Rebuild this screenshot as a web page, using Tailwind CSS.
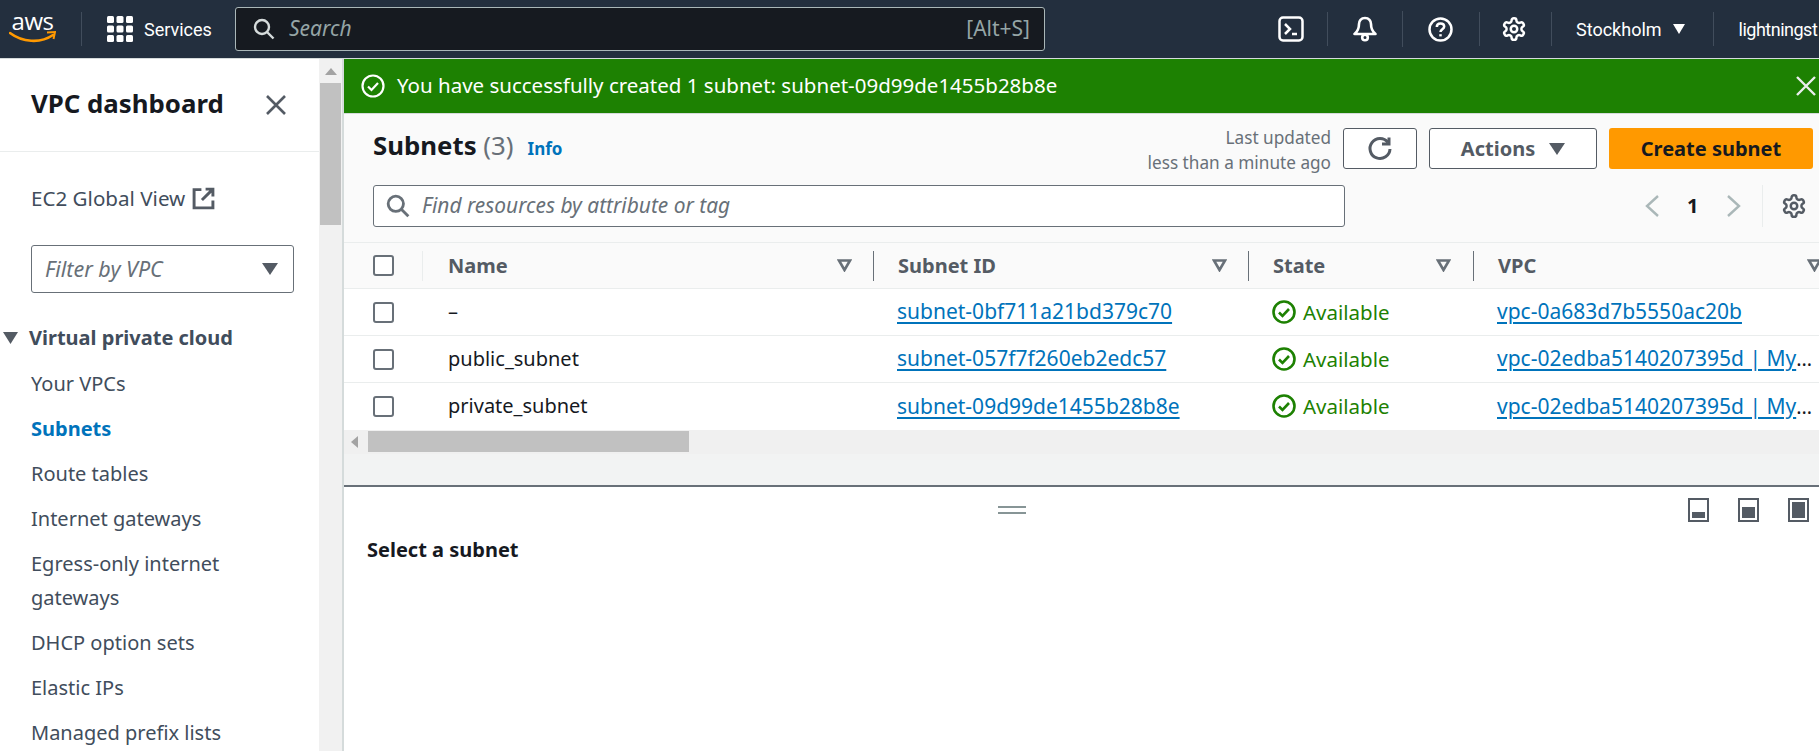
<!DOCTYPE html>
<html lang="en">
<head>
    <meta charset="UTF-8">
    <title>Subnets | VPC Console</title>
    <script src="https://cdn.jsdelivr.net/npm/@tailwindcss/browser@4"></script>
</head>
<body class="h-screen overflow-hidden bg-white font-['Noto_Sans',sans-serif] text-[20px] text-[#16191f]">
    <!-- Top bar -->
    <header class="h-[59px] flex items-center bg-[#232f3e] border-b border-[#d5dbdb] text-white whitespace-nowrap overflow-hidden font-['Roboto',sans-serif] text-[18px]">
        <div class="w-[82px] h-[34px] border-r border-[#414d5c] shrink-0 pl-[9px]">
            <div class="w-[47px] h-[34px] relative">
                <span class="block text-[24px] leading-[22px] font-['Open_Sans',sans-serif] tracking-[-0.5px] text-center -mt-[2px]">aws</span>
                <svg class="absolute left-0 top-[20px]" width="47" height="14" viewBox="0 0 47 14" fill="none"><path d="M1 3c12 9 30 11 43 2" stroke="#ff9900" stroke-width="2.6" stroke-linecap="round"/><path d="M38 2.5l8-.5-1.5 7" stroke="#ff9900" stroke-width="2" fill="none"/></svg>
            </div>
        </div>
        <svg class="ml-[25px] shrink-0" width="26" height="26" viewBox="0 0 26 26" fill="#fff"><rect x="0" y="0" width="7" height="7" rx="1.5"/><rect x="9.500" y="0" width="7" height="7" rx="1.500"/><rect x="19" y="0" width="7" height="7" rx="1.500"/><rect x="0" y="9.500" width="7" height="7" rx="1.500"/><rect x="9.500" y="9.500" width="7" height="7" rx="1.500"/><rect x="19" y="9.500" width="7" height="7" rx="1.500"/><rect x="0" y="19" width="7" height="7" rx="1.500"/><rect x="9.500" y="19" width="7" height="7" rx="1.500"/><rect x="19" y="19" width="7" height="7" rx="1.500"/></svg>
        <span class="ml-[11px] w-[91px] shrink-0">Services</span>
        <div class="w-[810px] h-[44px] shrink-0 flex items-center bg-[#161a20] border border-[#aab7b8] rounded-[3px] pl-[17px] pr-[14px] font-['Noto_Sans',sans-serif] text-[21px]">
            <svg width="22" height="22" viewBox="0 0 22 22" fill="none" stroke="#d5dbdb" stroke-width="2.400"><circle cx="9" cy="9" r="7"/><path d="M14 14l6.500 6.500"/></svg>
            <span class="ml-[14px] italic text-[#95a5a6]">Search</span>
            <span class="ml-auto text-[#95a5a6]">[Alt+S]</span>
        </div>
        <svg class="ml-[233px] shrink-0" width="26" height="26" viewBox="0 0 26 26" fill="none" stroke="#fff" stroke-width="2.500"><rect x="1.500" y="1.500" width="23" height="23" rx="3.500"/><path d="M7 8l5 5-5 5M14 18h5"/></svg>
        <div class="ml-[23px] w-px h-[34px] bg-[#414d5c] shrink-0"></div>
        <svg class="ml-[25px] shrink-0" width="24" height="26" viewBox="0 0 24 26" fill="none" stroke="#fff" stroke-width="2.600" stroke-linejoin="round"><path d="M12 2c-4 0-6 3-6 6 0 5-2 8-4.500 10h21C20 16 18 13 18 8c0-3-2-6-6-6z"/><circle cx="12" cy="21.500" r="2.800"/></svg>
        <div class="ml-[25px] w-px h-[36px] bg-[#414d5c] shrink-0"></div>
        <svg class="ml-[25px] shrink-0" width="25" height="25" viewBox="0 0 25 25" fill="none" stroke="#fff" stroke-width="2.500"><circle cx="12.500" cy="12.500" r="11"/><path d="M8.800 10c0-2.200 1.600-3.600 3.700-3.600s3.700 1.300 3.700 3.200c0 2.700-3.700 2.700-3.700 5.500"/><path d="M12.500 17.200v2.200"/></svg>
        <div class="ml-[26px] w-px h-[34px] bg-[#414d5c] shrink-0"></div>
        <svg class="ml-[21px] shrink-0" width="26" height="26" viewBox="0 0 24 24" fill="none" stroke="#fff" stroke-width="2.300" stroke-linejoin="round"><path d="M12.220 2h-.44a2 2 0 0 0-2 2v.18a2 2 0 0 1-1 1.730l-.43.250a2 2 0 0 1-2 0l-.15-.08a2 2 0 0 0-2.730.730l-.22.380a2 2 0 0 0 .730 2.730l.15.100a2 2 0 0 1 1 1.720v.510a2 2 0 0 1-1 1.740l-.15.090a2 2 0 0 0-.730 2.730l.22.380a2 2 0 0 0 2.730.730l.15-.08a2 2 0 0 1 2 0l.43.250a2 2 0 0 1 1 1.730V20a2 2 0 0 0 2 2h.44a2 2 0 0 0 2-2v-.18a2 2 0 0 1 1-1.730l.43-.25a2 2 0 0 1 2 0l.15.080a2 2 0 0 0 2.730-.730l.22-.39a2 2 0 0 0-.73-2.730l-.15-.08a2 2 0 0 1-1-1.740v-.5a2 2 0 0 1 1-1.740l.15-.09a2 2 0 0 0 .73-2.730l-.22-.38a2 2 0 0 0-2.730-.73l-.15.08a2 2 0 0 1-2 0l-.43-.25a2 2 0 0 1-1-1.730V4a2 2 0 0 0-2-2z"/><circle cx="12" cy="12" r="3"/></svg>
        <div class="ml-[24px] w-px h-[34px] bg-[#414d5c] shrink-0"></div>
        <span class="ml-[24px] shrink-0">Stockholm</span>
        <svg class="ml-[11px] shrink-0" width="12" height="10" viewBox="0 0 12 10" fill="#fff"><path d="M0 0h12L6 10z"/></svg>
        <div class="ml-[28px] w-px h-[34px] bg-[#414d5c] shrink-0"></div>
        <span class="ml-[25px] shrink-0 tracking-[-0.5px]">lightningst</span>
    </header>

    <div class="flex h-[692px]">
        <!-- Side nav -->
        <aside class="w-[319px] shrink-0 overflow-hidden">
            <div class="h-[93px] flex items-center justify-between pl-[31px] pr-[32px] border-b border-[#eaeded]">
                <h1 class="text-[25.800px] font-bold -mt-[4px]">VPC dashboard</h1>
                <svg width="22" height="22" viewBox="0 0 22 22" fill="none" stroke="#545b64" stroke-width="2.600"><path d="M2 2l18 18M20 2L2 20"/></svg>
            </div>
            <a class="mt-[33px] ml-[31px] h-[26px] flex items-center gap-[7px] text-[#414d5c] text-[20.600px]">EC2 Global View
                <svg width="23" height="23" viewBox="0 0 22 22" fill="none" stroke="#545b64" stroke-width="2.800"><path d="M9 2.500H2v17.500h18v-7M13 2h7v7M20 2L9.500 12.500"/></svg>
            </a>
            <div class="mt-[34px] ml-[31px] w-[263px] h-[48px] flex items-center justify-between border border-[#687078] rounded-[3px] pl-[13px] pr-[15px] italic text-[#687078] text-[21.500px]">Filter by VPC
                <svg width="16" height="12" viewBox="0 0 16 12" fill="#545b64"><path d="M0 0h16L8 12z"/></svg>
            </div>
            <div class="mt-[32px] flex items-center h-[26px] pl-[3px] font-bold text-[#414d5c]">
                <svg width="15" height="12" viewBox="0 0 15 12" fill="#545b64"><path d="M0 0h15L7.500 12z"/></svg>
                <span class="ml-[11px]">Virtual private cloud</span>
            </div>
            <ul class="mt-[20px] pl-[31px] text-[#414d5c] leading-[26px] flex flex-col gap-[19px]">
                <li>Your VPCs</li>
                <li class="font-bold text-[#0073bb]">Subnets</li>
                <li>Route tables</li>
                <li>Internet gateways</li>
                <li class="leading-[34px] -my-[4px] w-[240px]">Egress-only internet gateways</li>
                <li>DHCP option sets</li>
                <li>Elastic IPs</li>
                <li>Managed prefix lists</li>
            </ul>
        </aside>

        <!-- Page scrollbar -->
        <div class="w-[24px] shrink-0 bg-[#f1f1f1] border-r border-[#d5dbdb] pl-px">
            <div class="h-[24px] flex items-center justify-center">
                <svg width="12" height="7" viewBox="0 0 12 7" fill="#a3a3a3"><path d="M0 7L6 0l6 7z"/></svg>
            </div>
            <div class="w-[21px] h-[142px] bg-[#c1c1c1]"></div>
        </div>

        <!-- Main -->
        <main class="flex-1 min-w-0 overflow-hidden border-l border-[#d5dbdb]">
            <div class="h-[54px] flex items-center bg-[#1d8102] text-white pl-[17px] pr-[3px] border-b border-[#1d8102]">
                <svg width="24" height="24" viewBox="0 0 24 24" fill="none" stroke="#fff" stroke-width="2.200"><circle cx="12" cy="12" r="10.500"/><path d="M7 12.500l3.500 3.500 6.500-7"/></svg>
                <span class="ml-[12px] text-[20.500px]">You have successfully created 1 subnet: subnet-09d99de1455b28b8e</span>
                <svg class="ml-auto" width="20" height="20" viewBox="0 0 20 20" fill="none" stroke="#eaeded" stroke-width="2.400"><path d="M1 1l18 18M19 1L1 19"/></svg>
            </div>
            <div class="h-[129px] bg-[#fafafa] border-t border-[#d5dbdb] pl-[29px]">
                <div class="pt-[14px] h-[71px] flex items-start pr-[6px]">
                    <h2 class="text-[25.800px] leading-[36px] font-bold -mt-[1px]">Subnets <span class="font-normal text-[#687078]">(3)</span></h2>
                    <a class="ml-[14px] mt-[6px] text-[17px] leading-[30px] font-bold text-[#0073bb]">Info</a>
                    <div class="ml-auto -mt-[3px] text-right text-[#687078] text-[17.200px] leading-[25px]">Last updated<br>less than a minute ago</div>
                    <button class="ml-[12px] w-[74px] h-[41px] flex items-center justify-center bg-white border border-[#545b64] rounded-[3px]">
                        <svg width="26" height="26" viewBox="0 0 26 26" fill="none" stroke="#545b64" stroke-width="3"><path d="M21 6.500A10 10 0 1 0 23 13"/><path d="M22 1.500v6.500h-7"/></svg>
                    </button>
                    <button class="ml-[12px] w-[168px] h-[41px] flex items-center justify-center gap-[14px] bg-white border border-[#545b64] rounded-[3px] font-bold text-[#545b64]">Actions
                        <svg width="16" height="12" viewBox="0 0 16 12" fill="#545b64"><path d="M0 0h16L8 12z"/></svg>
                    </button>
                    <button class="ml-[12px] w-[204px] h-[41px] bg-[#ff9900] rounded-[3px] font-bold">Create subnet</button>
                </div>
                <div class="h-[42px] flex items-center">
                    <div class="w-[972px] h-[42px] flex items-center bg-white border border-[#687078] rounded-[3px] pl-[12px] italic text-[#687078] text-[20.900px]">
                        <svg width="24" height="24" viewBox="0 0 22 22" fill="none" stroke="#687078" stroke-width="2.600"><circle cx="9" cy="9" r="7"/><path d="M14 14l6.500 6.500"/></svg>
                        <span class="ml-[12px]">Find resources by attribute or tag</span>
                    </div>
                    <svg class="ml-[299px]" width="16" height="24" viewBox="0 0 16 24" fill="none" stroke="#aab7b8" stroke-width="2.400"><path d="M14 2L3 12l11 10"/></svg>
                    <span class="ml-[27px] w-[20px] font-bold">1</span>
                    <svg class="ml-[19px]" width="16" height="24" viewBox="0 0 16 24" fill="none" stroke="#aab7b8" stroke-width="2.400"><path d="M2 2l11 10L2 22"/></svg>
                    <div class="ml-[20px] w-px h-[42px] bg-[#eaeded]"></div>
                    <svg class="ml-[18px]" width="26" height="26" viewBox="0 0 24 24" fill="none" stroke="#545b64" stroke-width="2.300" stroke-linejoin="round"><path d="M12.220 2h-.44a2 2 0 0 0-2 2v.18a2 2 0 0 1-1 1.730l-.43.250a2 2 0 0 1-2 0l-.15-.08a2 2 0 0 0-2.730.730l-.22.380a2 2 0 0 0 .730 2.730l.15.100a2 2 0 0 1 1 1.720v.510a2 2 0 0 1-1 1.740l-.15.090a2 2 0 0 0-.730 2.730l.22.380a2 2 0 0 0 2.730.730l.15-.08a2 2 0 0 1 2 0l.43.250a2 2 0 0 1 1 1.730V20a2 2 0 0 0 2 2h.44a2 2 0 0 0 2-2v-.18a2 2 0 0 1 1-1.730l.43-.25a2 2 0 0 1 2 0l.15.080a2 2 0 0 0 2.730-.730l.22-.39a2 2 0 0 0-.73-2.730l-.15-.08a2 2 0 0 1-1-1.740v-.5a2 2 0 0 1 1-1.740l.15-.09a2 2 0 0 0 .73-2.730l-.22-.38a2 2 0 0 0-2.730-.73l-.15.08a2 2 0 0 1-2 0l-.43-.25a2 2 0 0 1-1-1.730V4a2 2 0 0 0-2-2z"/><circle cx="12" cy="12" r="3"/></svg>
                </div>
            </div>

            <!-- Table -->
            <table class="table-fixed w-[1499px] border-collapse">
                <colgroup>
                    <col class="w-[79px]"><col class="w-[450px]"><col class="w-[375px]"><col class="w-[225px]"><col class="w-[370px]">
                </colgroup>
                <thead class="bg-[#fafafa] text-[#545b64] font-bold">
                    <tr class="h-[46px] border-y border-[#eaeded]">
                        <th class="pl-[29px]"><div class="w-[21px] h-[21px] bg-white border-2 border-[#687078] rounded-[3px]"></div></th>
                        <th>
                            <div class="h-[30px] flex items-center border-l border-[#eaeded] pl-[25px] pr-[21px] -ml-px"><span>Name</span>
                                <svg class="ml-auto" width="15" height="13" viewBox="0 0 15 13" fill="none" stroke="#687078" stroke-width="2.600"><path d="M2 1.500h11L7.500 11z"/></svg>
                            </div>
                        </th>
                        <th>
                            <div class="h-[30px] flex items-center border-l border-[#687078] pl-[24px] pr-[21px]"><span>Subnet ID</span>
                                <svg class="ml-auto" width="15" height="13" viewBox="0 0 15 13" fill="none" stroke="#687078" stroke-width="2.600"><path d="M2 1.500h11L7.500 11z"/></svg>
                            </div>
                        </th>
                        <th>
                            <div class="h-[30px] flex items-center border-l border-[#687078] pl-[24px] pr-[22px]"><span>State</span>
                                <svg class="ml-auto" width="15" height="13" viewBox="0 0 15 13" fill="none" stroke="#687078" stroke-width="2.600"><path d="M2 1.500h11L7.500 11z"/></svg>
                            </div>
                        </th>
                        <th>
                            <div class="h-[30px] flex items-center border-l border-[#687078] pl-[24px] pr-[21px]"><span>VPC</span>
                                <svg class="ml-auto" width="15" height="13" viewBox="0 0 15 13" fill="none" stroke="#687078" stroke-width="2.600"><path d="M2 1.500h11L7.500 11z"/></svg>
                            </div>
                        </th>
                    </tr>
                </thead>
                <tbody class="bg-white">
                    <tr class="h-[47px] border-b border-[#eaeded]">
                        <td class="pl-[29px]"><div class="w-[21px] h-[21px] border-2 border-[#687078] rounded-[3px]"></div></td>
                        <td class="pl-[25px]">–</td>
                        <td class="pl-[24px]"><a class="text-[21px] text-[#0073bb] underline decoration-2 underline-offset-[3px]">subnet-0bf711a21bd379c70</a></td>
                        <td class="pl-[24px]"><div class="flex items-center gap-[7px] text-[20.500px] text-[#1d8102]"><svg width="24" height="24" viewBox="0 0 24 24" fill="none" stroke="#1d8102" stroke-width="2.600"><circle cx="12" cy="12" r="10.500"/><path d="M7 12.500l3.500 3.500 6.500-7"/></svg>Available</div></td>
                        <td class="pl-[24px]"><a class="text-[21px] text-[#0073bb] underline decoration-2 underline-offset-[3px]">vpc-0a683d7b5550ac20b</a></td>
                    </tr>
                    <tr class="h-[47px] border-b border-[#eaeded]">
                        <td class="pl-[29px]"><div class="w-[21px] h-[21px] border-2 border-[#687078] rounded-[3px]"></div></td>
                        <td class="pl-[25px]">public_subnet</td>
                        <td class="pl-[24px]"><a class="text-[21px] text-[#0073bb] underline decoration-2 underline-offset-[3px]">subnet-057f7f260eb2edc57</a></td>
                        <td class="pl-[24px]"><div class="flex items-center gap-[7px] text-[20.500px] text-[#1d8102]"><svg width="24" height="24" viewBox="0 0 24 24" fill="none" stroke="#1d8102" stroke-width="2.600"><circle cx="12" cy="12" r="10.500"/><path d="M7 12.500l3.500 3.500 6.500-7"/></svg>Available</div></td>
                        <td class="pl-[24px] whitespace-nowrap"><a class="text-[21px] text-[#0073bb] underline decoration-2 underline-offset-[3px]">vpc-02edba5140207395d | My</a>…</td>
                    </tr>
                    <tr class="h-[47px]">
                        <td class="pl-[29px]"><div class="w-[21px] h-[21px] border-2 border-[#687078] rounded-[3px]"></div></td>
                        <td class="pl-[25px]">private_subnet</td>
                        <td class="pl-[24px]"><a class="text-[21px] text-[#0073bb] underline decoration-2 underline-offset-[3px]">subnet-09d99de1455b28b8e</a></td>
                        <td class="pl-[24px]"><div class="flex items-center gap-[7px] text-[20.500px] text-[#1d8102]"><svg width="24" height="24" viewBox="0 0 24 24" fill="none" stroke="#1d8102" stroke-width="2.600"><circle cx="12" cy="12" r="10.500"/><path d="M7 12.500l3.500 3.500 6.500-7"/></svg>Available</div></td>
                        <td class="pl-[24px] whitespace-nowrap"><a class="text-[21px] text-[#0073bb] underline decoration-2 underline-offset-[3px]">vpc-02edba5140207395d | My</a>…</td>
                    </tr>
                </tbody>
            </table>

            <!-- Horizontal scrollbar -->
            <div class="h-[24px] flex items-center bg-[#f0f0f0]">
                <svg class="ml-[7px]" width="7" height="12" viewBox="0 0 7 12" fill="#a3a3a3"><path d="M7 0L0 6l7 6z"/></svg>
                <div class="ml-[10px] w-[321px] h-[21px] bg-[#c1c1c1]"></div>
            </div>
            <div class="h-[33px] bg-[#f2f3f3] border-b-2 border-[#687078]"></div>

            <!-- Split panel -->
            <div class="h-[46px] flex items-center pr-[10px]">
                <div class="ml-[654px] w-[28px] h-[8px] border-y-2 border-[#879596]"></div>
                <svg class="ml-[662px]" width="21" height="24" viewBox="0 0 21 24"><rect x="1" y="1" width="19" height="22" fill="none" stroke="#545b64" stroke-width="2"/><rect x="4" y="14" width="13" height="6" fill="#545b64"/></svg>
                <svg class="ml-[29px]" width="21" height="24" viewBox="0 0 21 24"><rect x="1" y="1" width="19" height="22" fill="none" stroke="#545b64" stroke-width="2"/><rect x="4" y="9" width="13" height="11" fill="#545b64"/></svg>
                <svg class="ml-[29px]" width="21" height="24" viewBox="0 0 21 24"><rect x="1" y="1" width="19" height="22" fill="none" stroke="#545b64" stroke-width="2"/><rect x="4" y="4" width="13" height="16" fill="#545b64"/></svg>
            </div>
            <h3 class="mt-[4px] pl-[23px] font-bold leading-[26px]">Select a subnet</h3>
        </main>
    </div>
</body>
</html>
